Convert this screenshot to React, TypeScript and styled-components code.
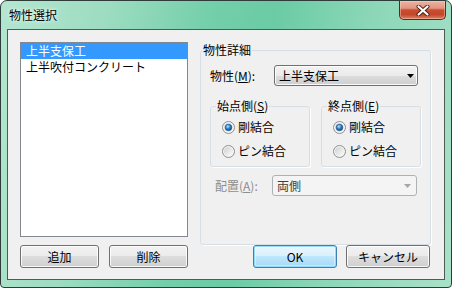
import React, { useId } from 'react'
import styled, { createGlobalStyle } from 'styled-components'

const uiFont = `"Noto Sans CJK JP", "Noto Sans", sans-serif`

const GlobalStyle = createGlobalStyle`
    html, body {
        margin: 0;
        padding: 0;
        background: #ffffff;
    }

    body {
        font-family: ${uiFont};
        font-size: 12px;
        color: #000000;
    }
`

const Window = styled.div`
    box-sizing: border-box;
    width: 452px;
    height: 288px;
    border: 1px solid #2e3d39;
    border-radius: 7px 7px 4px 4px;
    background: linear-gradient(100deg, #b4e6d0 0%, #9cdcc0 22%, #74cfab 42%, #6acba5 55%, #8cd7b8 75%, #a9e1c8 100%);
    display: flex;
    flex-direction: column;
    overflow: hidden;
`

const TitleBar = styled.div`
    flex: none;
    height: 28px;
    display: flex;
    align-items: flex-start;
    justify-content: space-between;
`

const Title = styled.div`
    padding: 7px 0 0 8px;
    font-size: 12px;
    line-height: 14px;
    color: #000000;
    text-shadow: 0 0 5px rgba(255, 255, 255, 0.9), 0 0 2px rgba(255, 255, 255, 0.8);
`

const CloseButton = styled.div`
    box-sizing: border-box;
    width: 47px;
    height: 19px;
    margin-right: 5px;
    border: 1px solid #5b2a1e;
    border-top: none;
    border-radius: 0 0 5px 5px;
    background: linear-gradient(#eeb3a2 0%, #e19582 40%, #c94d31 50%, #c4472b 75%, #dc8266 100%);
    box-shadow: inset 0 0 0 1px rgba(255, 210, 190, 0.45);
    display: flex;
    align-items: center;
    justify-content: center;
`

const Client = styled.div`
    flex: 1;
    margin: 0 6px 7px 6px;
    border: 1px solid #4c5d57;
    background: #f0f0f0;
    display: flex;
    gap: 12px;
    padding: 12px 13px 11px 12px;
`

const LeftColumn = styled.div`
    width: 168px;
    display: flex;
    flex-direction: column;
    gap: 8px;
`

const RightColumn = styled.div`
    width: 231px;
    display: flex;
    flex-direction: column;
    justify-content: space-between;
`

const ListBox = styled.div`
    flex: 1;
    box-sizing: border-box;
    border: 1px solid #828790;
    background: #ffffff;
`

const ListItem = styled.div<{ $selected?: boolean }>`
    height: 16px;
    line-height: 16px;
    padding-left: 5px;
    font-size: 12px;
    white-space: nowrap;
    overflow: hidden;
    background: ${p => (p.$selected ? '#3399ff' : 'transparent')};
    color: ${p => (p.$selected ? '#ffffff' : '#000000')};
`

const ButtonRow = styled.div<{ $end?: boolean }>`
    display: flex;
    justify-content: ${p => (p.$end ? 'flex-end' : 'space-between')};
    gap: 9px;
    padding-right: ${p => (p.$end ? '1px' : '0')};
`

const Button = styled.button<{ $width: number; $default?: boolean }>`
    box-sizing: border-box;
    width: ${p => p.$width}px;
    height: 23px;
    padding: 0;
    font-family: ${uiFont};
    font-size: 12px;
    line-height: 21px;
    color: #000000;
    border: 1px solid ${p => (p.$default ? '#3c7fb1' : '#707070')};
    border-radius: 3px;
    background: ${p =>
        p.$default
            ? 'linear-gradient(#eaf6fd 0%, #d9f0fc 50%, #bee6fd 50%, #a7d9f5 100%)'
            : 'linear-gradient(#f2f2f2 0%, #ebebeb 50%, #dddddd 50%, #cfcfcf 100%)'};
    box-shadow: ${p =>
        p.$default
            ? 'inset 0 0 0 1px rgba(140, 215, 250, 0.9), inset 0 0 0 2px rgba(255, 255, 255, 0.35)'
            : 'inset 0 0 0 1px rgba(255, 255, 255, 0.85)'};
`

const Group = styled.fieldset`
    margin: 0;
    padding: 0;
    min-width: 0;
    border: 1px solid #d5dfe5;
    border-radius: 3px;
    box-shadow: 1px 1px 0 rgba(255, 255, 255, 0.9);
    flex: 1;
`

const Legend = styled.legend<{ $offset: number }>`
    margin-left: ${p => p.$offset}px;
    padding: 0 1px;
    height: 16px;
    line-height: 16px;
    font-size: 12px;
    color: #000000;
`

const GroupBody = styled.div`
    padding: 0 9px 11px 9px;
    display: flex;
    flex-direction: column;
`

const FieldRow = styled.div<{ $top: number }>`
    display: flex;
    align-items: center;
    margin-top: ${p => p.$top}px;
`

const FieldLabel = styled.div<{ $width: number; $indent: number; $disabled?: boolean }>`
    box-sizing: border-box;
    width: ${p => p.$width}px;
    padding-left: ${p => p.$indent}px;
    font-size: 12px;
    line-height: 16px;
    color: ${p => (p.$disabled ? '#8d8d8d' : '#000000')};
`

const Key = styled.span`
    text-decoration: underline;
    text-underline-offset: 1px;
`

const Combo = styled.div<{ $width: number; $disabled?: boolean }>`
    box-sizing: border-box;
    width: ${p => p.$width}px;
    height: 21px;
    display: flex;
    align-items: center;
    justify-content: space-between;
    padding: ${p => (p.$disabled ? '0 5px 0 4px' : '0 3px 0 4px')};
    font-size: 12px;
    line-height: 19px;
    border: 1px solid ${p => (p.$disabled ? '#adb2b5' : '#707070')};
    border-radius: 3px;
    color: ${p => (p.$disabled ? '#404040' : '#000000')};
    background: ${p =>
        p.$disabled
            ? '#f4f4f4'
            : 'linear-gradient(#f2f2f2 0%, #ebebeb 50%, #dddddd 50%, #cfcfcf 100%)'};
    box-shadow: ${p => (p.$disabled ? 'none' : 'inset 0 0 0 1px rgba(255, 255, 255, 0.85)')};
`

const SubGroups = styled.div`
    display: flex;
    gap: 11px;
    margin-top: 12px;
`

const RadioList = styled.div`
    display: flex;
    flex-direction: column;
    gap: 8px;
    padding: 5px 0 7px 11px;
`

const RadioRow = styled.div`
    display: flex;
    align-items: center;
    gap: 3px;
    height: 16px;
    line-height: 16px;
    font-size: 12px;
`

const CloseGlyph = () => (
    <svg width="14" height="11" viewBox="0 0 14 11">
        <path d="M2.5 1.5 L11.5 9.5 M11.5 1.5 L2.5 9.5" stroke="#4a2018" strokeWidth="4" strokeLinecap="round" />
        <path d="M2.5 1.5 L11.5 9.5 M11.5 1.5 L2.5 9.5" stroke="#ffffff" strokeWidth="2.2" strokeLinecap="round" />
    </svg>
)

const Arrow = ({ disabled }: { disabled?: boolean }) => (
    <svg width="7" height="4" viewBox="0 0 7 4">
        <polygon points="0,0 7,0 3.5,4" fill={disabled ? '#a6a6a6' : '#000000'} />
    </svg>
)

const Radio = ({ checked }: { checked?: boolean }) => {
    const id = useId().replace(/:/g, '')
    return (
        <svg width="13" height="13" viewBox="0 0 13 13">
            <defs>
                <linearGradient id={`${id}ring`} x1="0" y1="0" x2="1" y2="1">
                    <stop offset="0" stopColor="#d0d0d0" />
                    <stop offset="1" stopColor="#fdfdfd" />
                </linearGradient>
                <radialGradient id={`${id}dot`} cx="0.4" cy="0.35" r="0.7">
                    <stop offset="0" stopColor="#b8ecff" />
                    <stop offset="0.45" stopColor="#2f8ad6" />
                    <stop offset="1" stopColor="#0f3f74" />
                </radialGradient>
            </defs>
            <circle cx="6.5" cy="6.5" r="6" fill="#f4f4f4" stroke="#8e8f8f" />
            <circle cx="6.5" cy="6.5" r="4.6" fill={`url(#${id}ring)`} />
            {checked && <circle cx="6.5" cy="6.5" r="3.3" fill={`url(#${id}dot)`} stroke="#1d4f80" strokeWidth="0.6" />}
        </svg>
    )
}

const items = ['上半支保工', '上半吹付コンクリート']

const sides = [
    { name: '始点側', key: 'S' },
    { name: '終点側', key: 'E' },
]

export default function App () {

    return (
        <>
            <GlobalStyle />
            <Window>
                <TitleBar>
                    <Title>物性選択</Title>
                    <CloseButton>
                        <CloseGlyph />
                    </CloseButton>
                </TitleBar>

                <Client>
                    <LeftColumn>
                        <ListBox>
                            {items.map ((item, k) => (
                                <ListItem key={item} $selected={k === 0}>{item}</ListItem>
                            ))}
                        </ListBox>
                        <ButtonRow>
                            <Button $width={79}>追加</Button>
                            <Button $width={79}>削除</Button>
                        </ButtonRow>
                    </LeftColumn>

                    <RightColumn>
                        <Group>
                            <Legend $offset={1}>物性詳細</Legend>
                            <GroupBody>
                                <FieldRow $top={7}>
                                    <FieldLabel $width={64} $indent={0}>物性(<Key>M</Key>):</FieldLabel>
                                    <Combo $width={144}>
                                        <span>上半支保工</span>
                                        <Arrow />
                                    </Combo>
                                </FieldRow>

                                <SubGroups>
                                    {sides.map (side => (
                                        <Group key={side.key}>
                                            <Legend $offset={5}>{side.name}(<Key>{side.key}</Key>)</Legend>
                                            <RadioList>
                                                <RadioRow><Radio checked />剛結合</RadioRow>
                                                <RadioRow><Radio />ピン結合</RadioRow>
                                            </RadioList>
                                        </Group>
                                    ))}
                                </SubGroups>

                                <FieldRow $top={8}>
                                    <FieldLabel $width={62} $indent={5} $disabled>配置(<Key>A</Key>):</FieldLabel>
                                    <Combo $width={145} $disabled>
                                        <span>両側</span>
                                        <Arrow disabled />
                                    </Combo>
                                </FieldRow>
                            </GroupBody>
                        </Group>

                        <ButtonRow $end>
                            <Button $width={84} $default>OK</Button>
                            <Button $width={84}>キャンセル</Button>
                        </ButtonRow>
                    </RightColumn>
                </Client>
            </Window>
        </>
    )

}
